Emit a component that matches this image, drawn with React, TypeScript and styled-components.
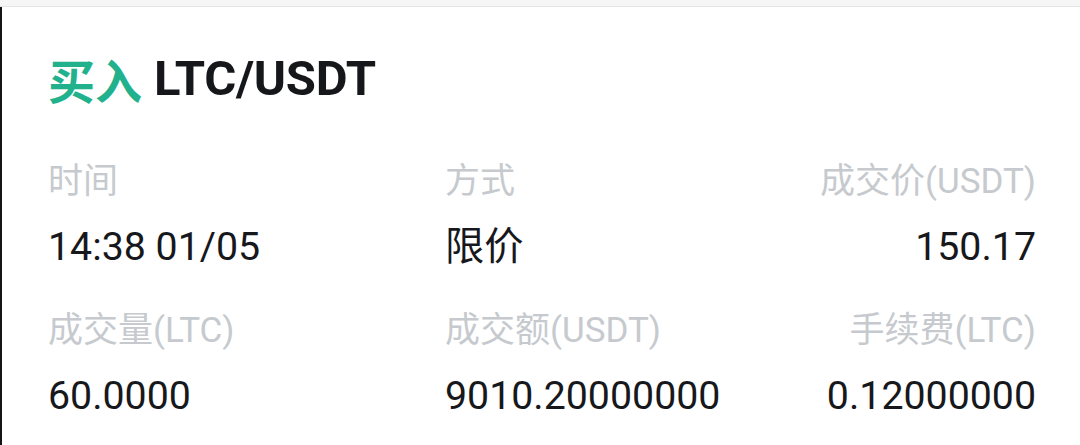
import React from "react";
import styled, { createGlobalStyle } from "styled-components";

const GlobalStyle = createGlobalStyle`
  html, body {
    margin: 0;
    padding: 0;
    background: #ffffff;
  }
  body {
    font-family: Roboto, "Noto Sans CJK SC", sans-serif;
    -webkit-font-smoothing: antialiased;
  }
`;

const Screen = styled.div`
  display: flex;
  flex-direction: column;
  width: 1080px;
  height: 445px;
  overflow: hidden;
  background: #ffffff;
`;

const TopStrip = styled.div`
  height: 6px;
  flex-shrink: 0;
  background: #f6f6f6;
  border-bottom: 1px solid #e6e6e6;
`;

const Body = styled.div`
  display: flex;
  flex: 1;
`;

const EdgeBar = styled.div`
  width: 2px;
  flex-shrink: 0;
  background: #151515;
`;

const Card = styled.div`
  flex: 1;
  padding: 44px 44px 0 46px;
`;

const Title = styled.h1`
  margin: 0;
  display: flex;
  align-items: center;
  gap: 12px;
  height: 56px;
  font-size: 49px;
  line-height: 56px;
  font-weight: 700;
  color: #16171b;
  letter-spacing: -0.3px;
`;

const Side = styled.span`
  color: #21b28d;
  font-family: "Noto Sans CJK SC", sans-serif;
  font-weight: 700;
  font-size: 47px;
  letter-spacing: 0;
`;

const Grid = styled.div`
  display: grid;
  grid-template-columns: 397px 1fr auto;
  row-gap: 42px;
  margin-top: 55px;
`;

const Cell = styled.div<{ $align?: "left" | "right" }>`
  display: flex;
  flex-direction: column;
  align-items: ${(p) => (p.$align === "right" ? "flex-end" : "flex-start")};
`;

const Label = styled.div`
  font-family: Roboto, "Noto Sans CJK SC", sans-serif;
  font-size: 35px;
  line-height: 40px;
  color: #c6cace;
  white-space: nowrap;
`;

const Value = styled.div`
  margin-top: 23px;
  font-family: Roboto, "Noto Sans CJK SC", sans-serif;
  font-size: 39.3px;
  line-height: 44px;
  color: #17181c;
  white-space: nowrap;
`;

const fields: { label: string; value: string; align?: "left" | "right" }[] = [
  { label: "时间", value: "14:38 01/05" },
  { label: "方式", value: "限价" },
  { label: "成交价(USDT)", value: "150.17", align: "right" },
  { label: "成交量(LTC)", value: "60.0000" },
  { label: "成交额(USDT)", value: "9010.20000000" },
  { label: "手续费(LTC)", value: "0.12000000", align: "right" },
];

export default function App() {
  return (
    <>
      <GlobalStyle />
      <Screen>
        <TopStrip />
        <Body>
          <EdgeBar />
          <Card>
            <Title>
              <Side>买入</Side>
              LTC/USDT
            </Title>
            <Grid>
              {fields.map((f) => (
                <Cell key={f.label} $align={f.align}>
                  <Label>{f.label}</Label>
                  <Value>{f.value}</Value>
                </Cell>
              ))}
            </Grid>
          </Card>
        </Body>
      </Screen>
    </>
  );
}
